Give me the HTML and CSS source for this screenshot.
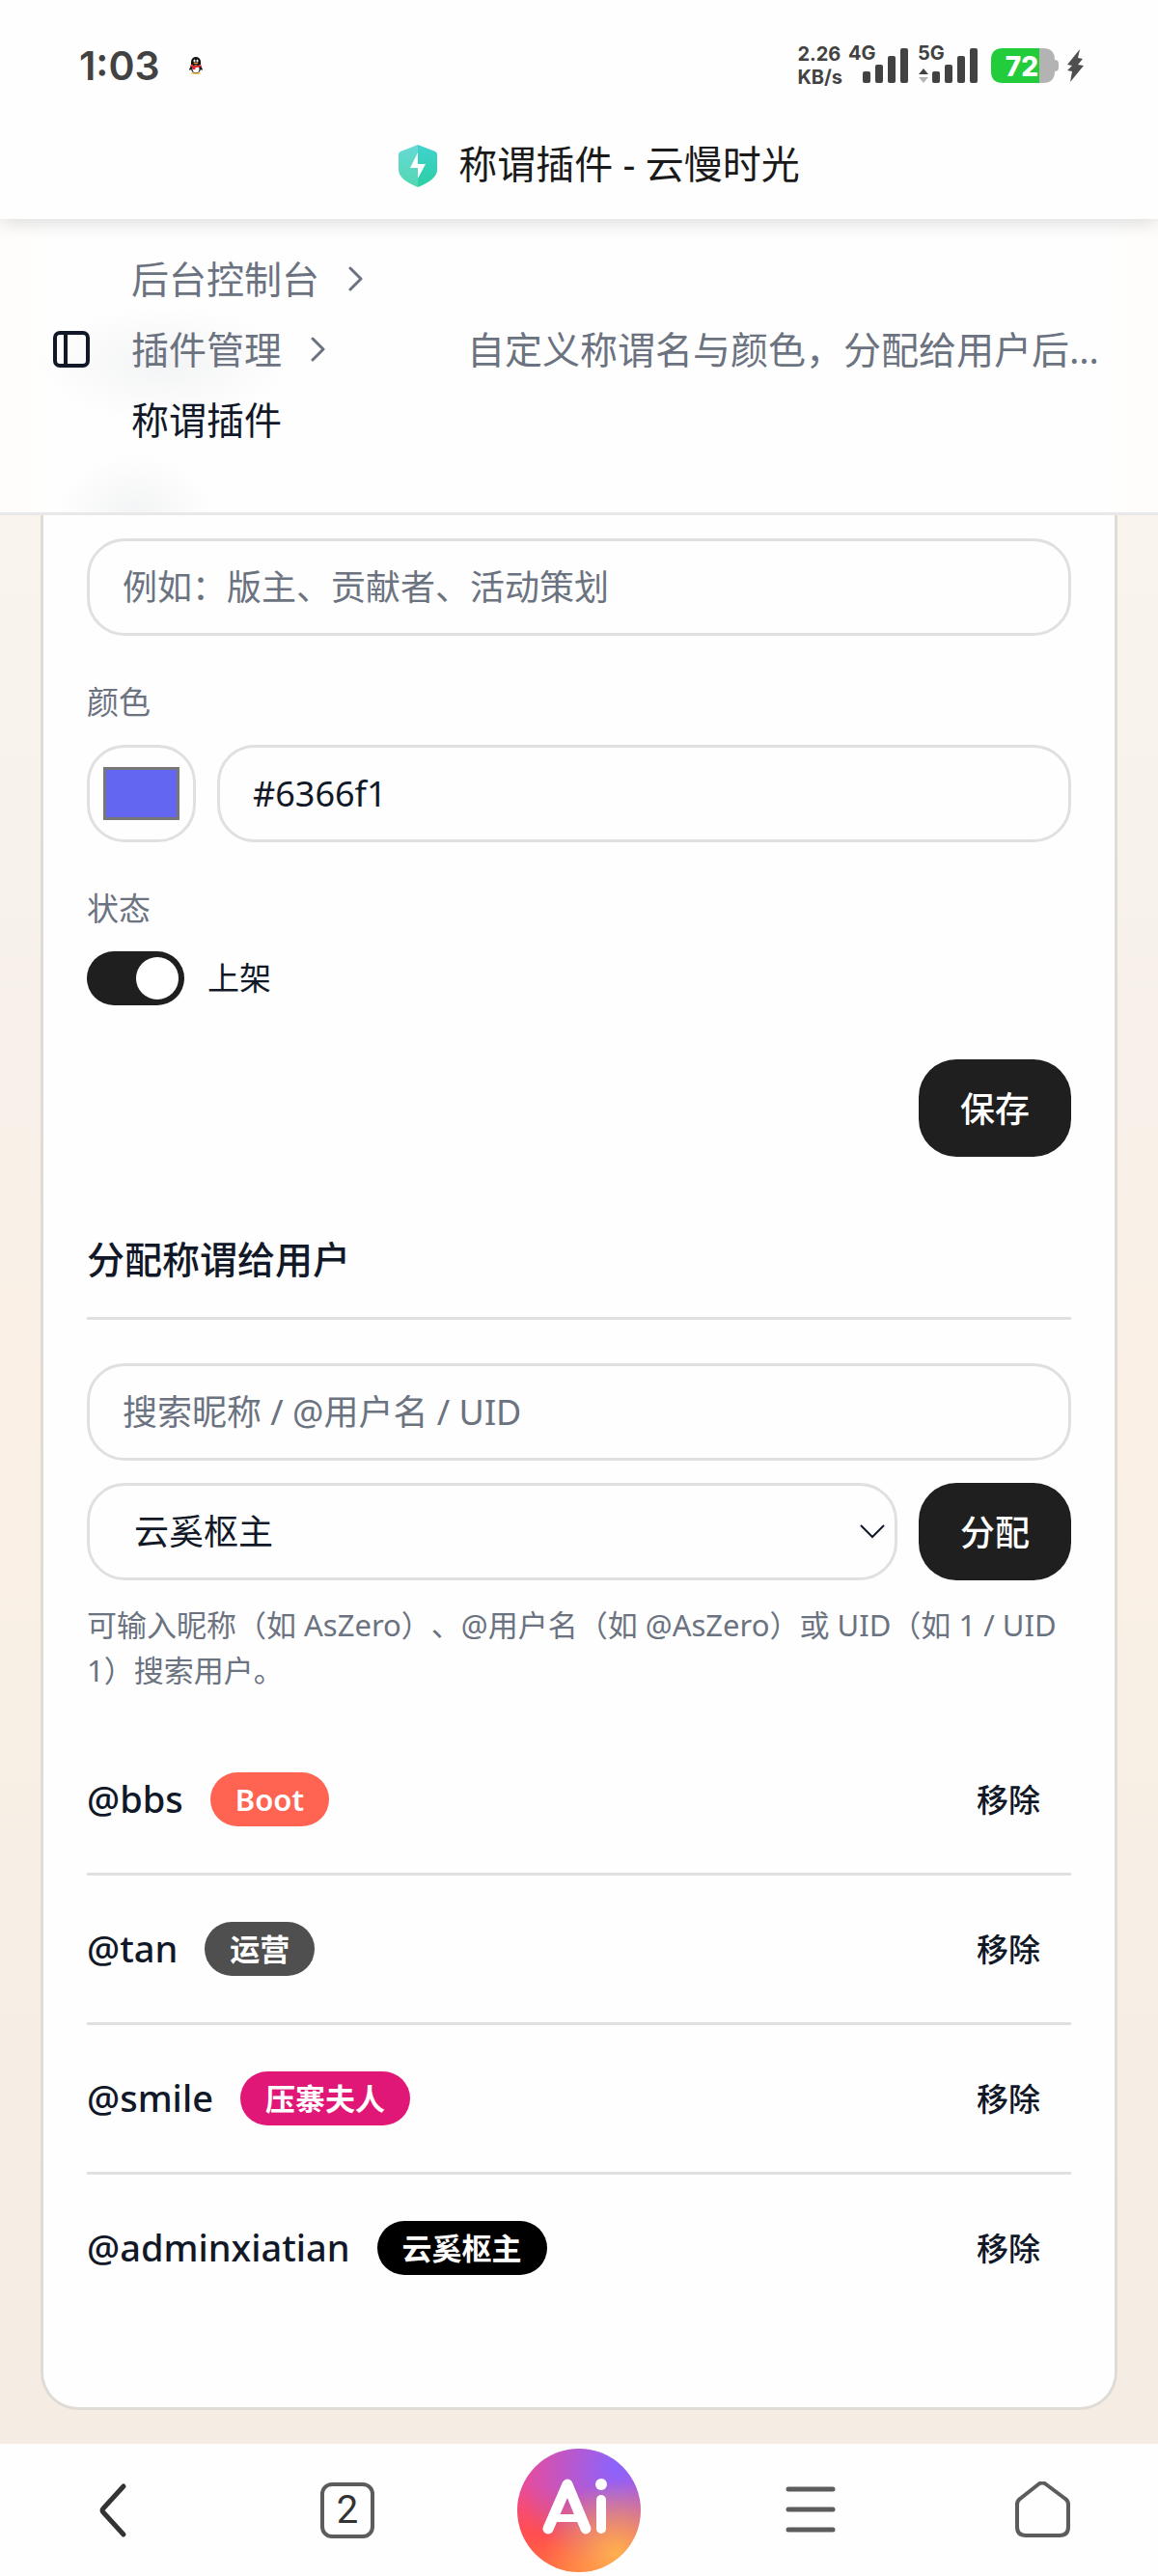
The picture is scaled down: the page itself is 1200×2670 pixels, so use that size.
FILE: index.html
```
<!DOCTYPE html>
<html lang="zh-CN">
<head>
    <meta charset="UTF-8">
    <meta name="viewport" content="width=device-width, initial-scale=1.0">
    <title>称谓插件 - 云慢时光</title>
    <link rel="stylesheet" href="styles.css">
</head>
<body>

<div class="top">
    <div class="status-bar">
        <div class="status-left">
            <span class="time">1:03</span>
            <svg class="penguin" viewBox="0 0 14 18" aria-hidden="true">
                <ellipse cx="7" cy="17" rx="5" ry="1" fill="#f2c24b"/>
                <path d="M2 9 0 13l1 1 2-3zM12 9l2 4-1 1-2-3z" fill="#111"/>
                <ellipse cx="7" cy="12" rx="5" ry="5" fill="#111"/>
                <ellipse cx="7" cy="12.500" rx="3.500" ry="4" fill="#fff"/>
                <path d="M2 8V5a5 5 0 0 1 10 0v3z" fill="#111"/>
                <ellipse cx="5.500" cy="4" rx="1" ry="1.500" fill="#fff"/>
                <ellipse cx="8.500" cy="4" rx="1" ry="1.500" fill="#fff"/>
                <ellipse cx="7" cy="6.500" rx="2.500" ry="0.800" fill="#f39b1d"/>
                <path d="M1.500 8q5.500 2 11 0v2q-3 1-6 1v2H4v-2l-2.500-1z" fill="#e0262b"/>
            </svg>
        </div>
        <div class="status-right">
            <div class="speed"><span>2.26</span><span>KB/s</span></div>
            <svg class="signal" viewBox="0 -6 62 48" aria-hidden="true">
                <text class="net" x="0" y="18">4G</text>
                <g fill="#424242">
                    <rect x="15" y="30" width="8" height="12" rx="2"/>
                    <rect x="28" y="23" width="8" height="19" rx="2"/>
                    <rect x="41" y="14" width="8" height="28" rx="2"/>
                    <rect x="54" y="6" width="8" height="36" rx="2"/>
                </g>
            </svg>
            <svg class="signal" viewBox="0 -6 62 48" aria-hidden="true">
                <text class="net" x="0" y="18">5G</text>
                <path d="m6 27 5 6H1z" fill="#424242"/>
                <path d="m6 42 5-6H1z" fill="#b3b3b3"/>
                <g fill="#424242">
                    <rect x="15" y="30" width="8" height="12" rx="2"/>
                    <rect x="28" y="23" width="8" height="19" rx="2"/>
                    <rect x="41" y="14" width="8" height="28" rx="2"/>
                    <rect x="54" y="6" width="8" height="36" rx="2"/>
                </g>
            </svg>
            <svg class="battery" viewBox="0 0 70 36" aria-hidden="true">
                <path d="M50 0h4q12 0 12 12 4 0 4 4v4q0 4-4 4 0 12-12 12h-4z" fill="#b3b3b3"/>
                <path d="M12 0h38v36H12Q0 36 0 24V12Q0 0 12 0z" fill="#22cc3a"/>
                <text class="level" x="32" y="29">72</text>
            </svg>
            <svg class="bolt" viewBox="0 0 18 36" aria-hidden="true">
                <path d="M14 1 1 17l5 1-5 5 5 1-2 11 14-17-6-1 5-6-5-1z" fill="#4f4f4f"/>
            </svg>
        </div>
    </div>
    <div class="title-bar">
        <svg class="shield" viewBox="0 0 40 44" aria-hidden="true">
            <defs>
                <linearGradient id="shieldLeft" x1="0" y1="0" x2="0" y2="1">
                    <stop offset="0" stop-color="#67d9d6"/>
                    <stop offset="1" stop-color="#53d7b2"/>
                </linearGradient>
                <linearGradient id="shieldRight" x1="0" y1="0" x2="0" y2="1">
                    <stop offset="0" stop-color="#41d2cf"/>
                    <stop offset="1" stop-color="#2bcfa3"/>
                </linearGradient>
            </defs>
            <path d="M20 0 2 7Q0 8 0 10v16q0 10 20 18z" fill="url(#shieldLeft)"/>
            <path d="m20 0 18 7q2 1 2 3v16q0 10-20 18z" fill="url(#shieldRight)"/>
            <path d="m20 8-8 16h8v11l8-15h-8z" fill="#fff"/>
        </svg>
        <span>称谓插件 - 云慢时光</span>
    </div>
</div>

<header class="header">
    <button class="icon-btn" type="button" aria-label="侧边栏">
        <svg width="40" height="40" viewBox="0 0 40 40" fill="none" stroke="#111827" stroke-width="4">
            <rect x="3" y="3" width="34" height="34" rx="5"/>
            <path d="M14 3v34"/>
        </svg>
    </button>
    <nav class="breadcrumb" aria-label="面包屑">
        <div class="crumb">
            <a href="#">后台控制台</a>
            <svg class="chevron" viewBox="0 0 16 26"><path d="m2 2 11 11L2 24"/></svg>
        </div>
        <div class="crumb">
            <a href="#">插件管理</a>
            <svg class="chevron" viewBox="0 0 16 26"><path d="m2 2 11 11L2 24"/></svg>
        </div>
        <div class="crumb current">称谓插件</div>
    </nav>
    <p class="summary">自定义称谓名与颜色，分配给用户后即可在社区各处展示</p>
</header>

<main class="page">
    <div class="card">
        <form class="form">
            <input class="input" type="text" aria-label="称谓名" placeholder="例如：版主、贡献者、活动策划">

            <div class="field">
                <label for="colorText">颜色</label>
                <div class="row">
                    <input class="color" type="color" value="#6366f1" aria-label="选择颜色">
                    <input class="input" id="colorText" type="text" value="#6366f1">
                </div>
            </div>

            <div class="field">
                <span class="label">状态</span>
                <label class="switch">
                    <input type="checkbox" checked>
                    <span>上架</span>
                </label>
            </div>

            <div class="form-actions">
                <button class="btn" type="button">保存</button>
            </div>
        </form>

        <h2 class="section-title">分配称谓给用户</h2>

        <form class="assign">
            <input class="input" type="text" aria-label="搜索用户" placeholder="搜索昵称 / @用户名 / UID">
            <div class="row">
                <select class="input select" aria-label="称谓">
                    <option>云奚枢主</option>
                    <option>压寨夫人</option>
                    <option>运营</option>
                    <option>Boot</option>
                </select>
                <button class="btn" type="button">分配</button>
            </div>
            <p class="hint">可输入昵称（如 AsZero）、@用户名（如 @AsZero）或 UID（如 1 / UID 1）搜索用户。</p>
        </form>

        <ul class="users">
            <li>
                <span class="name">@bbs</span>
                <span class="badge boot">Boot</span>
                <button class="remove" type="button">移除</button>
            </li>
            <li>
                <span class="name">@tan</span>
                <span class="badge ops">运营</span>
                <button class="remove" type="button">移除</button>
            </li>
            <li>
                <span class="name">@smile</span>
                <span class="badge lady">压寨夫人</span>
                <button class="remove" type="button">移除</button>
            </li>
            <li>
                <span class="name">@adminxiatian</span>
                <span class="badge master">云奚枢主</span>
                <button class="remove" type="button">移除</button>
            </li>
        </ul>
    </div>
</main>

<nav class="bottom-bar" aria-label="浏览器">
    <button type="button" aria-label="返回">
        <svg width="34" height="60" viewBox="0 0 34 60" fill="none" stroke="#333" stroke-width="5" stroke-linecap="round" stroke-linejoin="round">
            <path d="M25 5 4 28q-2 2 0 4l21 23"/>
        </svg>
    </button>
    <button type="button" aria-label="标签页">
        <span class="tabs">2</span>
    </button>
    <button type="button" aria-label="Ai">
        <span class="ai">
            <svg width="128" height="128" viewBox="0 0 128 128" fill="none" stroke="#fff" stroke-width="10" stroke-linecap="round" stroke-linejoin="round" aria-hidden="true">
                <path d="M32 83 52 37l19 46" stroke-width="11"/>
                <path d="M41 72h22" stroke-width="8"/>
                <path d="M87 53v30"/>
                <circle cx="87" cy="37" r="6" fill="#fff" stroke="none"/>
            </svg>
        </span>
    </button>
    <button type="button" aria-label="菜单">
        <svg width="52" height="60" viewBox="0 0 52 60" stroke="#5c5c5c" stroke-width="5" stroke-linecap="round">
            <path d="M3 8h46M3 29h46M3 50h46"/>
        </svg>
    </button>
    <button type="button" aria-label="主页">
        <svg width="58" height="60" viewBox="0 0 58 60" fill="none" stroke="#5c5c5c" stroke-width="4" stroke-linejoin="round">
            <path d="M25 3q4-3 8 0l20 15q3 2 3 6v23q0 9-9 9H12q-9 0-9-9V24q0-4 3-6z"/>
        </svg>
    </button>
</nav>

</body>
</html>
```
FILE: styles.css
```
* {
    box-sizing: border-box;
}
body {
    margin: 0;
    min-height: 100vh;
    display: flex;
    flex-direction: column;
    font-family: "Noto Sans", "Noto Sans CJK SC", sans-serif;
    font-size: 36px;
    color: #111827;
    background-color: #f7f1e9;
    text-spacing-trim: space-all;
}
button, input, select {
    font-family: inherit;
    font-size: 36px;
    color: inherit;
}
button {
    border: none;
    background: none;
    padding: 0;
}
svg {
    display: block;
    flex: none;
}

/* status + title */
.top {
    background-color: #fefefe;
    box-shadow: 0 2px 20px rgba(0, 0, 0, 0.16);
    position: relative;
    z-index: 2;
}
.status-bar {
    display: flex;
    justify-content: space-between;
    align-items: center;
    height: 136px;
    padding: 0 77px 0 82px;
}
.status-left {
    display: flex;
    align-items: center;
    gap: 30px;
}
.time {
    font-family: Inter, sans-serif;
    font-size: 41px;
    font-weight: 600;
    color: #424242;
}
.penguin {
    width: 14px;
    height: 18px;
}
.status-right {
    display: flex;
    align-items: center;
    color: #424242;
}
.speed {
    display: flex;
    flex-direction: column;
    font-family: Inter, sans-serif;
    font-size: 20px;
    font-weight: 700;
    line-height: 24px;
    margin-right: 6px;
}
.signal {
    width: 62px;
    height: 48px;
    margin: 0 10px 12px 0;
}
.net {
    font-family: Inter, sans-serif;
    font-size: 20px;
    font-weight: 700;
    fill: #424242;
}
.battery {
    width: 70px;
    height: 36px;
    margin: 0 8px 0 4px;
}
.level {
    font-family: Inter, sans-serif;
    font-size: 28px;
    font-weight: 800;
    text-anchor: middle;
    fill: #fff;
}
.bolt {
    width: 18px;
    height: 36px;
}
.title-bar {
    display: flex;
    justify-content: center;
    align-items: center;
    gap: 22px;
    height: 72px;
    margin-bottom: 19px;
    padding-left: 42px;
    font-size: 40px;
    line-height: 72px;
    color: #1a1a1a;
}
.title-bar span {
    padding-bottom: 4px;
}
.shield {
    width: 40px;
    height: 44px;
}

/* page header */
.header {
    display: flex;
    align-items: center;
    padding: 25px 48px 60px 54px;
    border-bottom: 3px solid #e8e8e8;
    background:
        radial-gradient(ellipse 130px 60px at 170px 150px, #f3f4f5, rgba(243, 244, 245, 0)),
        radial-gradient(ellipse 80px 60px at 140px 304px, #f3f4f5, rgba(243, 244, 245, 0)),
        linear-gradient(to right, #fefdfb, #fefefe 60px, #fefefe calc(100% - 60px), #fefdfb);
}
.breadcrumb {
    width: 348px;
    margin-left: 42px;
    font-size: 39px;
    line-height: 73px;
    color: #6b7280;
}
.crumb {
    display: flex;
    align-items: center;
    gap: 30px;
}
.crumb a {
    color: inherit;
    text-decoration: none;
}
.crumb.current {
    color: #111827;
}
.chevron {
    width: 16px;
    height: 26px;
    fill: none;
    stroke: #6b7280;
    stroke-width: 3;
    stroke-linecap: round;
    stroke-linejoin: round;
}
.summary {
    flex: 1;
    min-width: 0;
    margin: 0;
    font-size: 39px;
    line-height: 73px;
    color: #6b7280;
    white-space: nowrap;
    overflow: hidden;
    text-overflow: ellipsis;
}

/* card */
.page {
    flex: 1;
    padding: 0 42px 35px;
    background: linear-gradient(#f9f4ed, #f7f1ea 25%, #faf0e6 45%, #f7efe5 70%, #f5ede4);
}
.card {
    padding: 24px 45px 89px;
    background-color: #fefefe;
    border: 3px solid #dfdbd5;
    border-top: none;
    border-radius: 0 0 39px 39px;
}
.input {
    display: block;
    width: 100%;
    min-width: 0;
    height: 101px;
    padding: 0 34px;
    border: 3px solid #e0e0e0;
    border-radius: 39px;
    background-color: transparent;
}
.input::placeholder {
    color: #6b7280;
    opacity: 1;
}
.field {
    display: flex;
    flex-direction: column;
    gap: 20px;
    margin-top: 45px;
    font-size: 33px;
    line-height: 48px;
}
.field > label:first-child, .label {
    color: #6b7280;
}
.row {
    display: flex;
    gap: 22px;
}
.color {
    flex: none;
    width: 113px;
    height: 101px;
    padding: 0;
    border: 3px solid #e0e0e0;
    border-radius: 39px;
    background: none;
}
.color::-webkit-color-swatch-wrapper {
    padding: 20px 14px;
}
.color::-webkit-color-swatch {
    border: 3px solid #777;
    border-radius: 0;
}
.switch {
    display: flex;
    align-items: center;
    gap: 24px;
    height: 56px;
}
.switch input {
    appearance: none;
    display: flex;
    justify-content: flex-end;
    width: 101px;
    height: 56px;
    margin: 0;
    padding: 6px;
    border-radius: 28px;
    background-color: #1f1f1f;
}
.switch input::before {
    content: "";
    width: 44px;
    height: 44px;
    border-radius: 50%;
    background-color: #fff;
}
.form-actions {
    display: flex;
    justify-content: flex-end;
    margin-top: 56px;
}
.btn {
    flex: none;
    height: 101px;
    padding: 0 43px 2px;
    border-radius: 39px;
    background-color: #1f1f1f;
    color: #fff;
    font-weight: 500;
}
.section-title {
    margin: 76px 0 45px;
    padding-bottom: 30px;
    border-bottom: 3px solid #e0e0e0;
    font-size: 39px;
    font-weight: 500;
    line-height: 60px;
}
.assign {
    display: flex;
    flex-direction: column;
    gap: 23px;
}
.select {
    appearance: none;
    padding: 0 46px;
    background-image: url("data:image/svg+xml,%3Csvg xmlns='http://www.w3.org/2000/svg' viewBox='0 0 26 16' fill='none' stroke='%23111827' stroke-width='2'%3E%3Cpath d='m1 1 12 12L25 1'/%3E%3C/svg%3E");
    background-repeat: no-repeat;
    background-position: right 10px center;
    background-size: 26px 16px;
}
.hint {
    margin: 0;
    font-size: 31px;
    line-height: 47px;
    color: #6b7280;
}

/* users */
.users {
    margin: 34px 0 0;
    padding: 0;
    list-style: none;
}
.users li {
    display: flex;
    align-items: center;
    height: 155px;
    border-bottom: 3px solid #e0e0e0;
}
.users li:last-child {
    height: 152px;
    border-bottom: none;
}
.name {
    margin-right: 28px;
    padding-bottom: 2px;
    font-size: 38px;
    font-weight: 500;
}
.badge {
    padding: 0 26px;
    border-radius: 28px;
    font-size: 31px;
    font-weight: 600;
    line-height: 56px;
    color: #fff;
}
.boot {
    background-color: #ff6352;
}
.ops {
    background-color: #4f4f4f;
}
.lady {
    background-color: #e11778;
}
.master {
    background-color: #000;
}
.remove {
    margin-left: auto;
    padding: 0 32px 2px;
    font-size: 33px;
    font-weight: 500;
}

/* bottom bar */
.bottom-bar {
    display: grid;
    grid-template-columns: repeat(5, 1fr);
    height: 137px;
    background-color: #fefefe;
}
.bottom-bar button {
    display: flex;
    justify-content: center;
    align-items: center;
}
.tabs {
    width: 56px;
    height: 58px;
    border: 4px solid #5c5c5c;
    border-radius: 12px;
    font-family: Roboto, sans-serif;
    font-size: 40px;
    line-height: 50px;
    text-align: center;
    color: #333;
}
.ai {
    border-radius: 50%;
    overflow: hidden;
    background:
        radial-gradient(circle at 80% 85%, #ffb050, rgba(255, 176, 80, 0) 50%),
        radial-gradient(circle at 80% 15%, #8a64ff, rgba(138, 100, 255, 0) 70%),
        linear-gradient(to bottom, #ee4a94 30%, #ff4f4f 70%, #ff7040);
}
```
